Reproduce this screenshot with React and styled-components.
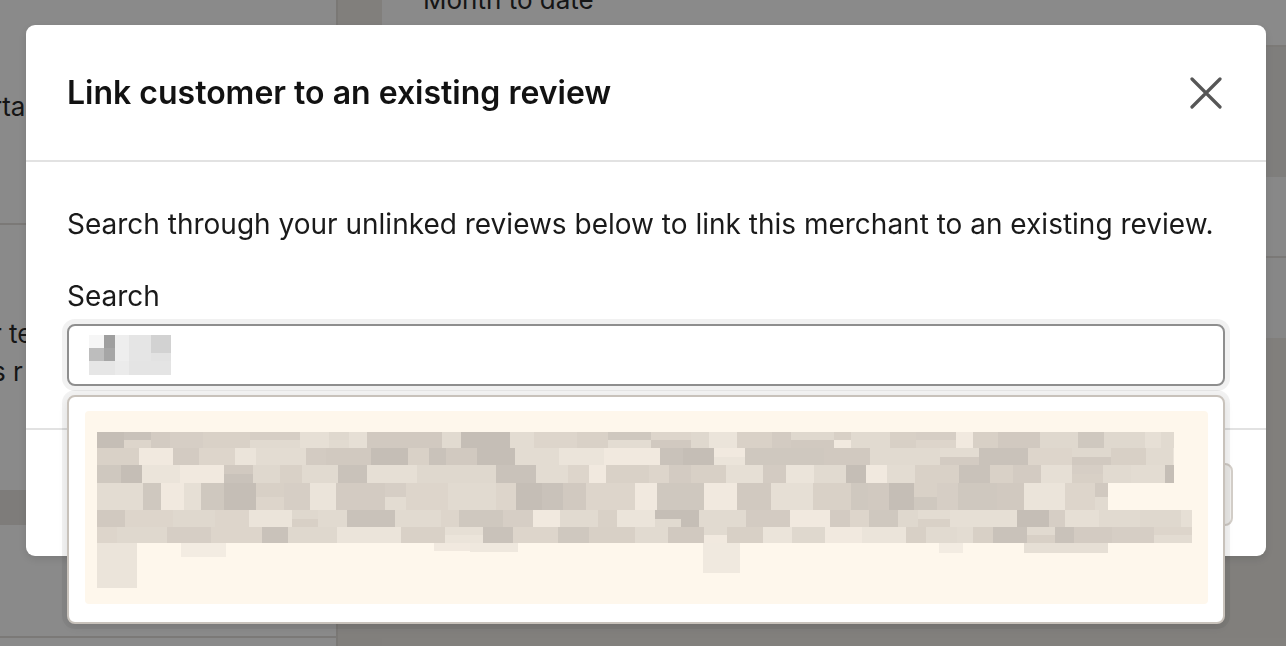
import React from "react";
import styled, { createGlobalStyle } from "styled-components";

const GlobalStyle = createGlobalStyle`
  html, body { margin: 0; padding: 0; }
  body {
    font-family: Inter, "Noto Sans", "Liberation Sans", sans-serif;
    color: #161616;
    overflow: hidden;
  }
  * { box-sizing: border-box; }
`;

/* ---------- underlying page (dimmed) ---------- */
const Page = styled.div`
  display: grid;
  grid-template-columns: 338px 44px 1fr;
  height: 646px;
  overflow: hidden;
  background: #fff;
`;

const Sidebar = styled.aside`
  display: flex;
  flex-direction: column;
  background: #fff;
  border-right: 2px solid #e2ded9;
  font-size: 26px;
  color: #2a2a2a;
`;

const SideSection = styled.div`
  height: ${(p) => p.$h}px;
  padding-top: ${(p) => p.$pt || 0}px;
  background: ${(p) => p.$bg || "#fff"};
  border-bottom: ${(p) => (p.$line ? "2px solid #e4e0dc" : "none")};
  display: flex;
  flex-direction: column;
  gap: 4px;
`;

const SideText = styled.div`
  margin-left: -8px;
  line-height: 34px;
  white-space: nowrap;
`;

const Gutter = styled.div`
  background: #eeebe6;
`;

const Main = styled.main`
  display: flex;
  flex-direction: column;
  background: #f0ede7;
`;

const MainHead = styled.div`
  height: 57px;
  background: #fff;
  padding-left: 41px;
  font-size: 26px;
  color: #2a2a2a;
  line-height: 20px;
  margin-top: -10px;
  border-bottom: 2px solid #e6e2dc;
`;

const MainBand = styled.div`
  height: ${(p) => p.$h}px;
  background: ${(p) => p.$bg};
  border-bottom: ${(p) => (p.$line ? "2px solid #e4e0dc" : "none")};
`;

/* ---------- overlay + modal ---------- */
const Overlay = styled.div`
  position: fixed;
  inset: 0;
  background: rgba(0, 0, 0, 0.46);
  padding: 25px 20px 0 26px;
`;

const Modal = styled.div`
  position: relative;
  width: 1240px;
  height: 531px;
  background: #fff;
  border-radius: 9px;
  box-shadow: 0 3px 10px rgba(0, 0, 0, 0.12);
  display: flex;
  flex-direction: column;
`;

const Header = styled.header`
  height: 137px;
  flex: none;
  display: flex;
  align-items: center;
  justify-content: space-between;
  padding: 0 44px 0 41px;
  border-bottom: 2px solid #e2e2e2;
`;

const Title = styled.h2`
  margin: 0;
  font-size: 32px;
  font-weight: 600;
  color: #121212;
`;

const CloseButton = styled.button`
  border: 0;
  background: transparent;
  padding: 0;
  width: 32px;
  height: 32px;
  display: flex;
  cursor: pointer;
`;

const Body = styled.div`
  flex: none;
  padding: 44px 41px 42px;
  display: flex;
  flex-direction: column;
  border-bottom: 2px solid #e2e2e2;
`;

const Intro = styled.p`
  margin: 0;
  font-size: 28px;
  line-height: 36px;
  color: #1a1a1a;
`;

const Label = styled.label`
  margin-top: 36px;
  font-size: 28px;
  line-height: 36px;
  color: #1a1a1a;
`;

const Field = styled.div`
  position: relative;
  margin-top: 10px;
`;

const InputBox = styled.div`
  height: 62px;
  width: 1158px;
  border: 2px solid #8e8e8e;
  border-radius: 8px;
  box-shadow: 0 0 0 5px #f1f1f1;
  background: #fff;
  display: flex;
  align-items: center;
  padding-left: 20px;
`;

const Dropdown = styled.div`
  position: absolute;
  top: 71px;
  left: 0;
  width: 1158px;
  height: 229px;
  background: #fff;
  border: 2px solid #c8c2bb;
  border-radius: 8px;
  box-shadow: 0 0 0 5px rgba(0, 0, 0, 0.05), 0 4px 10px rgba(0, 0, 0, 0.08);
  padding: 14px 15px 18px 16px;
  z-index: 2;
`;

const Option = styled.div`
  height: 193px;
  background: #fef7ec;
  border-radius: 4px;
  padding: 21px 12px 0;
`;

const Footer = styled.footer`
  flex: 1;
  display: flex;
  justify-content: flex-end;
  align-items: flex-start;
  gap: 16px;
  padding: 33px 33px 0 41px;
`;

const FooterButton = styled.button`
  height: 63px;
  padding: 0 28px;
  border-radius: 8px;
  border: 2px solid #d3cec8;
  background: #f1f0ee;
  font-family: inherit;
  font-size: 24px;
  color: #222;
`;

/* ---------- redacted mosaic drawings ---------- */
function rng(seed) {
  let s = seed;
  return () => {
    s = (s * 1103515245 + 12345) % 2147483648;
    return s / 2147483648;
  };
}

const PALETTE = [
  "#d6cec5", "#ddd5cb", "#c9c2ba", "#e3dcd2", "#d3cbc2",
  "#ebe4da", "#d1c9c0", "#c5beb6", "#dfd8ce", "#e6dfd5",
  "#d9d1c7", "#cfc8bf", "#e1dad0", "#f1e9df", "#d8d0c6",
];

const ROWS = [
  { y: 0, h: 16, x1: 1077 },
  { y: 16, h: 17, x1: 1077 },
  { y: 33, h: 18, x1: 1077 },
  { y: 51, h: 27, x1: 1011 },
  { y: 78, h: 17, x1: 1095 },
  { y: 95, h: 16, x1: 1095 },
];

const EXTRA = [
  { x: 0, y: 111, w: 40, h: 45, c: "#ebe4da" },
  { x: 84, y: 111, w: 45, h: 14, c: "#f3ece2" },
  { x: 337, y: 111, w: 46, h: 8, c: "#f1e9df" },
  { x: 373, y: 111, w: 48, h: 9, c: "#efe8de" },
  { x: 606, y: 111, w: 37, h: 30, c: "#f0e9df" },
  { x: 842, y: 111, w: 24, h: 10, c: "#f3ece2" },
  { x: 927, y: 111, w: 84, h: 10, c: "#e6dfd5" },
];

function buildMosaic() {
  const r = rng(131);
  const cells = [];
  ROWS.forEach((row) => {
    let x = 0;
    while (x < row.x1) {
      const w = Math.min(Math.round(16 + r() * 34), row.x1 - x);
      const split = r() < 0.15;
      if (split) {
        const h1 = Math.round(row.h / 2);
        cells.push({ x, y: row.y, w, h: h1, c: PALETTE[Math.floor(r() * PALETTE.length)] });
        cells.push({ x, y: row.y + h1, w, h: row.h - h1, c: PALETTE[Math.floor(r() * PALETTE.length)] });
      } else {
        cells.push({ x, y: row.y, w, h: row.h, c: PALETTE[Math.floor(r() * PALETTE.length)] });
      }
      x += w;
    }
  });
  return cells.concat(EXTRA);
}

const MOSAIC = buildMosaic();

function RedactedText() {
  return (
    <svg width="1096" height="160" viewBox="0 0 1096 160" style={{ display: "block" }} aria-label="redacted review text">
      {MOSAIC.map((c, i) => (
        <rect key={i} x={c.x} y={c.y} width={c.w} height={c.h} fill={c.c} />
      ))}
    </svg>
  );
}

function RedactedQuery() {
  const cells = [
    { x: 0, y: 0, w: 15, h: 13, c: "#f6f6f6" },
    { x: 0, y: 13, w: 15, h: 13, c: "#bdbdbd" },
    { x: 15, y: 0, w: 11, h: 13, c: "#9f9f9f" },
    { x: 15, y: 13, w: 11, h: 13, c: "#a6a6a6" },
    { x: 26, y: 0, w: 14, h: 26, c: "#eeeeee" },
    { x: 40, y: 0, w: 22, h: 26, c: "#e5e5e5" },
    { x: 62, y: 0, w: 20, h: 18, c: "#d2d2d2" },
    { x: 62, y: 18, w: 20, h: 8, c: "#e2e2e2" },
    { x: 0, y: 26, w: 26, h: 14, c: "#e6e6e6" },
    { x: 26, y: 26, w: 14, h: 14, c: "#ebebeb" },
    { x: 40, y: 26, w: 42, h: 14, c: "#e4e4e4" },
  ];
  return (
    <svg width="82" height="40" viewBox="0 0 82 40" style={{ display: "block" }} aria-label="redacted query">
      {cells.map((c, i) => (
        <rect key={i} x={c.x} y={c.y} width={c.w} height={c.h} fill={c.c} />
      ))}
    </svg>
  );
}

function CloseIcon() {
  return (
    <svg width="32" height="32" viewBox="0 0 32 32" fill="none">
      <path d="M2 2 L30 30 M30 2 L2 30" stroke="#565656" strokeWidth="3.2" strokeLinecap="round" />
    </svg>
  );
}

export default function App() {
  return (
    <>
      <GlobalStyle />
      <Page>
        <Sidebar>
          <SideSection $h={225} $pt={90} $line>
            <SideText>rtant</SideText>
          </SideSection>
          <SideSection $h={265} $pt={92}>
            <SideText>r te</SideText>
            <SideText>s r</SideText>
          </SideSection>
          <SideSection $h={35} $bg="#e9e6e2" />
          <SideSection $h={113} $line />
        </Sidebar>
        <Gutter />
        <Main>
          <MainHead>Month to date</MainHead>
          <MainBand $h={130} $bg="#ebe9e6" />
          <MainBand $h={81} $bg="#fcfcfc" $line />
          <MainBand $h={80} $bg="#f9f9f9" />
          <MainBand $h={300} $bg="#eeebe6" />
        </Main>
      </Page>

      <Overlay>
        <Modal role="dialog" aria-modal="true">
          <Header>
            <Title>Link customer to an existing review</Title>
            <CloseButton aria-label="Close">
              <CloseIcon />
            </CloseButton>
          </Header>
          <Body>
            <Intro>
              Search through your unlinked reviews below to link this merchant to an existing review.
            </Intro>
            <Label>Search</Label>
            <Field>
              <InputBox>
                <RedactedQuery />
              </InputBox>
              <Dropdown>
                <Option>
                  <RedactedText />
                </Option>
              </Dropdown>
            </Field>
          </Body>
          <Footer>
            <FooterButton>Cancel</FooterButton>
            <FooterButton>Link review</FooterButton>
          </Footer>
        </Modal>
      </Overlay>
    </>
  );
}
